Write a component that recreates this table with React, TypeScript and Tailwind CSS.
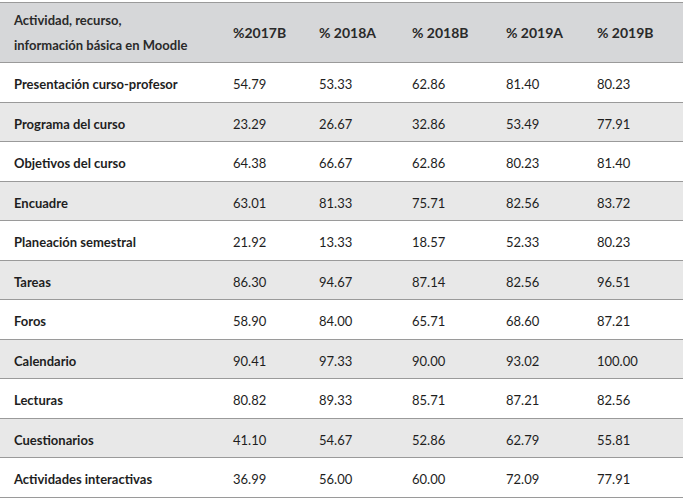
const HEADERS = ['%2017B', '% 2018A', '% 2018B', '% 2019A', '% 2019B'];

const ROWS: [string, string[]][] = [
  ['Presentación curso-profesor', ['54.79', '53.33', '62.86', '81.40', '80.23']],
  ['Programa del curso', ['23.29', '26.67', '32.86', '53.49', '77.91']],
  ['Objetivos del curso', ['64.38', '66.67', '62.86', '80.23', '81.40']],
  ['Encuadre', ['63.01', '81.33', '75.71', '82.56', '83.72']],
  ['Planeación semestral', ['21.92', '13.33', '18.57', '52.33', '80.23']],
  ['Tareas', ['86.30', '94.67', '87.14', '82.56', '96.51']],
  ['Foros', ['58.90', '84.00', '65.71', '68.60', '87.21']],
  ['Calendario', ['90.41', '97.33', '90.00', '93.02', '100.00']],
  ['Lecturas', ['80.82', '89.33', '85.71', '87.21', '82.56']],
  ['Cuestionarios', ['41.10', '54.67', '52.86', '62.79', '55.81']],
  ['Actividades interactivas', ['36.99', '56.00', '60.00', '72.09', '77.91']],
];

const COLS = 'grid grid-cols-[219px_86px_93px_94px_91px_1fr]';

export default function App() {
  return (
    <div className="w-[683px] h-[500px] bg-white pt-[2px] text-[13px] text-[#1e1e1e] font-['Lato','Liberation_Sans',sans-serif]">
      <div className="border-t border-[#9a9a9a]">
        <div className={`${COLS} h-[60px] items-center bg-[#d6d7d9] border-b border-[#9a9a9a] font-bold text-[#2a2a2a]`}>
          <div className="pl-[14px] leading-[25px]">
            Actividad, recurso,
            <br />
            información básica en Moodle
          </div>
          {HEADERS.map((h) => (
            <div key={h} className="pl-[14px] text-[14px]">
              {h}
            </div>
          ))}
        </div>
        {ROWS.map(([name, vals], i) => (
          <div
            key={name}
            className={`${COLS} h-[39.55px] pt-[5px] items-center border-b border-[#9a9a9a] ${i % 2 === 1 ? 'bg-[#e8e8e8]' : 'bg-white'}`}
          >
            <div className="pl-[14px] font-bold">{name}</div>
            {vals.map((v, j) => (
              <div key={j} className="pl-[14px]">
                {v}
              </div>
            ))}
          </div>
        ))}
      </div>
    </div>
  );
}
